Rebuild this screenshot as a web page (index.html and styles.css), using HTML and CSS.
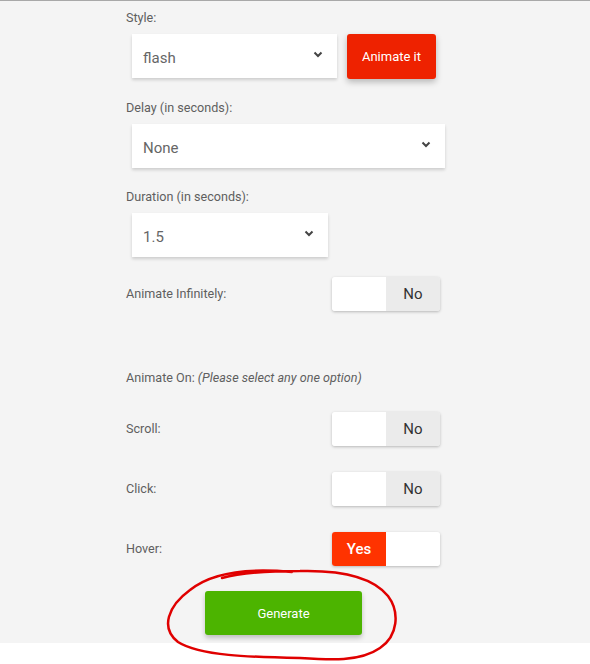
FILE: index.html
```html
<!DOCTYPE html>
<html lang="en">
<head>
  <meta charset="UTF-8">
  <title>Animate Generator</title>
  <meta name="viewport" content="width=device-width, initial-scale=1">
  <link rel="stylesheet" href="styles.css">
</head>
<body>
  <div class="panel">
    <div class="form">
      <div class="label">Style:</div>
      <div class="line">
        <div class="select style-select">
          <span>flash</span>
          <svg class="chev" width="10" height="7" viewBox="0 0 10 7"><polyline points="1.5,1.5 5,5 8.5,1.5" fill="none" stroke="#444" stroke-width="2"/></svg>
        </div>
        <button class="btn red">Animate it</button>
      </div>

      <div class="label gap">Delay (in seconds):</div>
      <div class="select delay-select">
        <span>None</span>
        <svg class="chev" width="10" height="7" viewBox="0 0 10 7"><polyline points="1.5,1.5 5,5 8.5,1.5" fill="none" stroke="#444" stroke-width="2"/></svg>
      </div>

      <div class="label gap">Duration (in seconds):</div>
      <div class="select dur-select">
        <span>1.5</span>
        <svg class="chev" width="10" height="7" viewBox="0 0 10 7"><polyline points="1.5,1.5 5,5 8.5,1.5" fill="none" stroke="#444" stroke-width="2"/></svg>
      </div>

      <div class="row first">
        <span class="label">Animate Infinitely:</span>
        <div class="toggle"><span class="half blank"></span><span class="half no">No</span></div>
      </div>

      <div class="label on-label">Animate On: <i>(Please select any one option)</i></div>

      <div class="row opt">
        <span class="label">Scroll:</span>
        <div class="toggle"><span class="half blank"></span><span class="half no">No</span></div>
      </div>
      <div class="row opt">
        <span class="label">Click:</span>
        <div class="toggle"><span class="half blank"></span><span class="half no">No</span></div>
      </div>
      <div class="row opt">
        <span class="label">Hover:</span>
        <div class="toggle"><span class="half yes">Yes</span><span class="half blank"></span></div>
      </div>

      <div class="gen-wrap">
        <button class="btn green">Generate</button>
      </div>
    </div>
  </div>

  <svg class="scribble" width="590" height="664" viewBox="0 0 590 664">
    <path d="M 292 572 C 250 568, 212 572, 190 590 C 168 606, 160 628, 178 642 C 200 656, 250 657, 300 658 C 330 660, 360 662, 380 648 C 398 636, 400 612, 388 596 C 372 576, 340 570, 300 571 C 270 571, 240 573, 222 578" fill="none" stroke="#e00000" stroke-width="2.5" stroke-linecap="round"/>
  </svg>
</body>
</html>
```

FILE: styles.css
```css
body { margin: 0; background: #fff; font-family: Roboto, "Liberation Sans", Arial, sans-serif; }
.panel { background: #f4f4f4; border-top: 1px solid #a8a8a8; height: 642px; }
.form { margin-left: 126px; width: 314px; padding-top: 9px; }

.label { font-size: 12.6px; line-height: 16px; color: #5f5f5f; }
.label.gap { margin-top: 21px; }
.on-label { margin-top: 59px; }

.line { display: flex; gap: 10px; margin-top: 8px; margin-left: 6px; }
.select { display: flex; align-items: center; justify-content: space-between; height: 44px; padding: 3px 14px 0 11px; background: #fff; box-shadow: 0 2px 3px rgba(0,0,0,.16); font-size: 15px; color: #666; box-sizing: border-box; }
.select .chev { margin-top: -7px; }
.style-select { width: 205px; }
.delay-select { width: 313px; margin: 8px 0 0 6px; }
.dur-select { width: 196px; margin: 8px 0 0 6px; }

.btn { border: none; border-radius: 3px; color: #fff; font-family: inherit; font-size: 13px; cursor: pointer; }
.btn.red { width: 89px; height: 45px; background: #ee2200; box-shadow: 0 3px 6px rgba(0,0,0,.25); }
.btn.green { width: 157px; height: 44px; background: #4cb400; box-shadow: 0 3px 5px rgba(0,0,0,.22); }

.row { display: flex; align-items: center; justify-content: space-between; }
.row.first { margin-top: 20px; }
.row.opt { margin-top: 26px; }
.on-label + .row { margin-top: 26px; }

.toggle { display: flex; width: 108px; height: 34px; border-radius: 3px; overflow: hidden; box-shadow: 0 1px 3px rgba(0,0,0,.25); }
.half { flex: 1; display: flex; align-items: center; justify-content: center; font-size: 15px; }
.half.blank { background: #fff; }
.half.no { background: #ebebeb; color: #333; }
.half.yes { background: #ff3300; color: #fff; font-weight: 500; }

.gen-wrap { margin-top: 25px; padding-left: 79px; }

.scribble { position: absolute; left: 0; top: 0; pointer-events: none; }
```
